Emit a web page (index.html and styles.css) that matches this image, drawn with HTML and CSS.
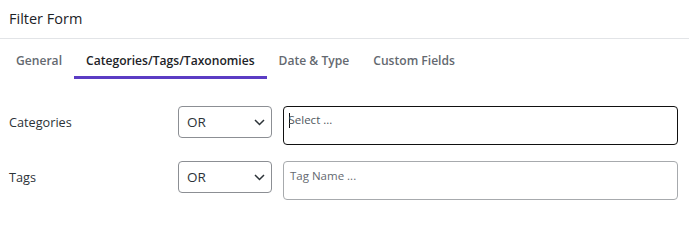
FILE: index.html
```html
<!DOCTYPE html>
<html>
<head>
<meta charset="utf-8">
<link rel="stylesheet" href="styles.css">
</head>
<body>
<div class="panel">
  <div class="header"><h1 class="title">Filter Form</h1></div>
  <nav class="tabs">
    <span class="tab">General</span>
    <span class="tab active">Categories/Tags/Taxonomies</span>
    <span class="tab">Date &amp; Type</span>
    <span class="tab">Custom Fields</span>
  </nav>
  <div class="content">
    <div class="row">
      <label class="label">Categories</label>
      <div class="select">
        <span>OR</span>
        <svg class="chev" width="11" height="7" viewBox="0 0 11 7"><path d="M1 1l4.5 4.5L10 1" fill="none" stroke="#2c3338" stroke-width="1.5"/></svg>
      </div>
      <div class="field focused"><span class="caret"></span><span class="ph dark">Select ...</span></div>
    </div>
    <div class="row">
      <label class="label">Tags</label>
      <div class="select">
        <span>OR</span>
        <svg class="chev" width="11" height="7" viewBox="0 0 11 7"><path d="M1 1l4.5 4.5L10 1" fill="none" stroke="#2c3338" stroke-width="1.5"/></svg>
      </div>
      <div class="field"><span class="ph">Tag Name ...</span></div>
    </div>
  </div>
</div>
</body>
</html>
```
FILE: styles.css
```css
* { box-sizing: border-box; }
body {
  margin: 0;
  background: #fff;
  font-family: "Open Sans", "Noto Sans", sans-serif;
  color: #1d2327;
}
.header {
  height: 39px;
  padding: 0 9px;
  border-bottom: 1px solid #e2e4e7;
  display: flex;
  align-items: center;
}
.title {
  margin: 0 0 2px;
  font-size: 14.5px;
  font-weight: 500;
  color: #1d2327;
}
.tabs {
  display: flex;
  padding-left: 4px;
}
.tab {
  padding: 13px 12px 6px;
  line-height: 18px;
  font-size: 12.1px;
  font-weight: 600;
  color: #646970;
  border-bottom: 3px solid transparent;
  white-space: nowrap;
}
.tab.active {
  color: #1d2327;
  border-bottom-color: #5b3cc4;
}
.content {
  padding: 27px 11px 0 9px;
  display: flex;
  flex-direction: column;
  gap: 16px;
}
.row {
  display: flex;
  align-items: flex-start;
}
.label {
  width: 169px;
  flex: none;
  line-height: 32px;
  font-size: 12.7px;
  color: #2c3338;
}
.select {
  width: 94px;
  height: 32px;
  flex: none;
  border: 1px solid #8c8f94;
  border-radius: 4px;
  display: flex;
  align-items: center;
  justify-content: space-between;
  padding: 0 6px 0 8px;
  font-size: 13.5px;
  color: #2c3338;
}
.chev { margin-top: 1px; }
.field {
  flex: 1;
  margin-left: 11px;
  height: 39px;
  border: 1px solid #a7aaad;
  border-radius: 4px;
  padding: 5px 6px 0 6px;
  display: flex;
  align-items: flex-start;
  font-size: 11.5px;
  line-height: 18px;
}
.field.focused {
  border: 1.5px solid #111;
  padding: 4px 6px 0 4.5px;
}
.caret {
  width: 1px;
  height: 15px;
  margin-top: 2px;
  background: #111;
}
.ph { color: #646970; }
.ph.dark { color: #50575e; margin-left: -1px; }
```
